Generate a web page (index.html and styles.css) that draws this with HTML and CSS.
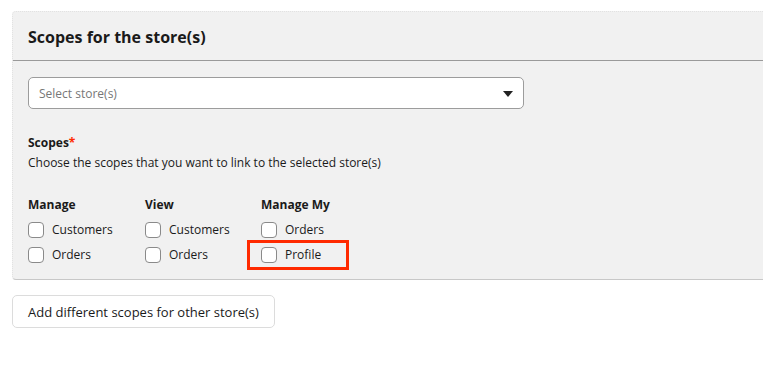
FILE: index.html
```html
<!DOCTYPE html>
<html>
<head>
<meta charset="utf-8">
<link rel="stylesheet" href="styles.css">
</head>
<body>
<div class="page">
  <section class="panel">
    <header class="panel-head">Scopes for the store(s)</header>
    <div class="panel-body">
      <div class="select">
        <span class="placeholder">Select store(s)</span>
        <svg class="caret" width="10" height="6" viewBox="0 0 10 6"><path d="M0 0H10L5 6Z" fill="#222"/></svg>
      </div>
      <div class="label">Scopes<span class="req">*</span></div>
      <div class="hint">Choose the scopes that you want to link to the selected store(s)</div>
      <div class="cols">
        <div class="col">
          <div class="col-title">Manage</div>
          <label class="cb"><span class="box"></span>Customers</label>
          <label class="cb"><span class="box"></span>Orders</label>
        </div>
        <div class="col">
          <div class="col-title">View</div>
          <label class="cb"><span class="box"></span>Customers</label>
          <label class="cb"><span class="box"></span>Orders</label>
        </div>
        <div class="col">
          <div class="col-title">Manage My</div>
          <label class="cb"><span class="box"></span>Orders</label>
          <label class="cb highlight"><span class="box"></span>Profile</label>
        </div>
      </div>
    </div>
  </section>
  <button class="add-btn">Add different scopes for other store(s)</button>
</div>
</body>
</html>
```
FILE: styles.css
```css
*, *::before, *::after { box-sizing: border-box; }
body {
  margin: 0;
  font-family: "Open Sans", "Liberation Sans", sans-serif;
  color: #1a1a1a;
  background: #fff;
}
.page {
  padding: 11px 0 0 12px;
}
.panel {
  background: #f1f1f1;
  border-top: 1px dotted #e2e2e2;
  border-left: 1px dotted #e2e2e2;
  border-bottom: 1px solid #c8c8c8;
  border-radius: 4px 0 0 4px;
}
.panel-head {
  height: 49px;
  padding: 14px 0 0 15px;
  font-size: 16px;
  font-weight: 700;
  border-bottom: 1px solid #9a9a9a;
  line-height: 22px;
}
.panel-body {
  padding: 16px 0 12px 15px;
}
.select {
  width: 496px;
  height: 32px;
  background: #fff;
  border: 1px solid #9c9c9c;
  border-radius: 5px;
  display: flex;
  align-items: center;
  justify-content: space-between;
  padding: 0 10px 0 10px;
}
.placeholder {
  font-size: 12px;
  color: #777;
}
.caret { margin-top: 1px; }
.label {
  margin-top: 25px;
  font-size: 12px;
  font-weight: 700;
  line-height: 18px;
}
.req { color: #ff2a00; }
.hint {
  font-size: 12px;
  line-height: 18px;
  margin-top: 2px;
}
.cols {
  display: flex;
  margin-top: 24px;
}
.col {
  display: flex;
  flex-direction: column;
}
.col:nth-child(1) { width: 117px; }
.col:nth-child(2) { width: 116px; }
.col-title {
  font-size: 12px;
  font-weight: 700;
  line-height: 18px;
  margin-bottom: 3px;
}
.cb {
  display: flex;
  align-items: center;
  gap: 8px;
  font-size: 12px;
  line-height: 18px;
  height: 25px;
  position: relative;
}
.box {
  width: 16px;
  height: 16px;
  background: #fff;
  border: 1px solid #8a8a8a;
  border-radius: 4px;
}
.highlight::after {
  content: "";
  position: absolute;
  left: -14px;
  top: -2px;
  width: 102px;
  height: 30px;
  border: 3px solid #ff2a00;
}
.add-btn {
  margin-top: 15px;
  height: 33px;
  padding: 0 15px;
  background: #fff;
  border: 1px solid #dcdcdc;
  border-radius: 5px;
  font-family: "Open Sans", "Liberation Sans", sans-serif;
  font-size: 13px;
  color: #1a1a1a;
}
```
